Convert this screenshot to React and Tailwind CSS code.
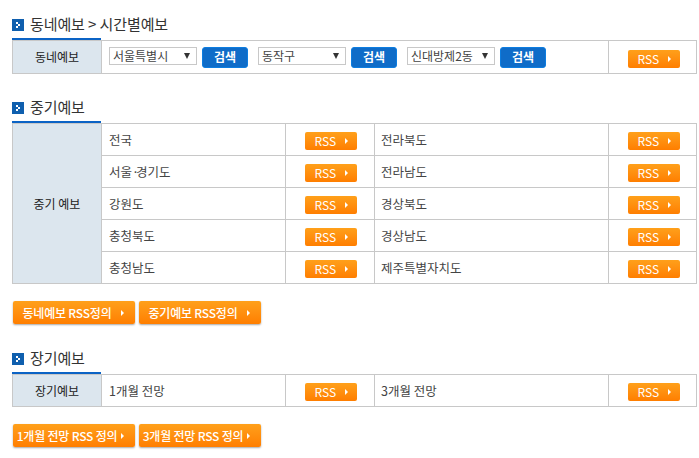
const font = { fontFamily: '"Noto Sans CJK KR", "Noto Sans", sans-serif' };

const midRows = [
  ['전국', '전라북도'],
  [<>서울<span className="tracking-[-3px]">·</span>경기도</>, '전라남도'],
  ['강원도', '경상북도'],
  ['충청북도', '경상남도'],
  ['충청남도', '제주특별자치도'],
];

const Bullet = () => (
  <svg width="12" height="12" viewBox="0 0 12 12" className="shrink-0">
    <rect width="12" height="12" fill="#0f5fae" />
    <rect x="4" y="3" width="2" height="2" fill="#fff" />
    <rect x="6" y="5" width="2" height="2" fill="#fff" />
    <rect x="4" y="7" width="2" height="2" fill="#fff" />
  </svg>
);

const Heading = ({ children }) => (
  <div>
    <h2 className="flex items-center gap-[6px] h-[24px] pb-[2px] text-[15px] font-normal text-[#333] tracking-[-0.1px]">
      <Bullet />
      <span className="mb-[2px]">{children}</span>
    </h2>
    <div className="w-[89px] h-[2px] bg-[#0b63c5]" />
  </div>
);

const Rss = () => (
  <a className="flex items-center justify-between w-[52px] h-[18px] pl-[10px] pr-[9px] rounded-[2px] bg-gradient-to-b from-[#ffa01a] to-[#ff7e00] text-white text-[12px]">
    RSS
    <span className="w-0 h-0 border-y-[3px] border-y-transparent border-l-[3px] border-l-white" />
  </a>
);

const RssCell = ({ className }) => (
  <div className={`flex items-center justify-center border-l border-[#c8c8c8] ${className}`}>
    <Rss />
  </div>
);

const Search = () => (
  <button className="w-[46px] h-[21px] rounded-[3px] bg-[#0f6cc8] border border-[#0d7de0] text-white text-[12px] font-bold leading-none">
    검색
  </button>
);

const Select = ({ label }) => (
  <div className="flex items-center justify-between w-[88px] h-[18px] pl-[3px] pr-[6px] border border-[#c8c8c8] text-[12px] text-[#444]">
    {label}
    <span className="w-0 h-0 border-x-[3px] border-x-transparent border-t-[6px] border-t-[#333]" />
  </div>
);

const SideCell = ({ children }) => (
  <div className="flex items-center justify-center w-[89px] shrink-0 bg-[#dce6ee] border-r border-[#c8c8c8] text-[12px] text-[#222]">
    {children}
  </div>
);

const OrangeButton = ({ children }) => (
  <a className="flex items-center w-[122px] h-[23px] pr-[11px] rounded-[2px] bg-gradient-to-b from-[#ffa01a] to-[#ff7e00] shadow-[0_1px_2px_rgba(0,0,0,0.35)] text-white text-[12px] font-medium whitespace-nowrap tracking-[-0.2px]">
    <span className="flex-1 text-center">{children}</span>
    <span className="shrink-0 w-0 h-0 border-y-[3px] border-y-transparent border-l-[3px] border-l-white" />
  </a>
);

const App = () => {
  return (
    <div className="w-[699px] h-[458px] bg-white overflow-hidden pl-[12px] pr-[2px] pt-[14px]" style={font}>
      <Heading>동네예보 &gt; 시간별예보</Heading>
      <div className="flex h-[34px] border border-[#c8c8c8]">
        <SideCell>동네예보</SideCell>
        <div className="flex items-center flex-1 pl-[7px]">
          <div className="flex items-start gap-[5px] mr-[10px]"><Select label="서울특별시" /><Search /></div>
          <div className="flex items-start gap-[5px] mr-[10px]"><Select label="동작구" /><Search /></div>
          <div className="flex items-start gap-[5px]"><Select label="신대방제2동" /><Search /></div>
        </div>
        <RssCell className="w-[88px] pt-[4px] pl-[2px]" />
      </div>

      <div className="mt-[23px]">
        <Heading>중기예보</Heading>
      </div>
      <div className="flex border border-[#c8c8c8]">
        <SideCell>중기 예보</SideCell>
        <div className="flex-1">
          {midRows.map((row, i) => (
            <div key={i} className={`flex text-[12.5px] text-[#444] ${i > 0 ? 'h-[32px] border-t border-[#c8c8c8]' : 'h-[31px]'}`}>
              <div className="flex items-center w-[183px] pl-[7px] pt-[1px]">{row[0]}</div>
              <RssCell className="w-[90px] border-r pt-[3px] pl-[1px]" />
              <div className="flex items-center flex-1 pl-[6px] pt-[1px]">{row[1]}</div>
              <RssCell className="w-[88px] pt-[3px] pl-[2px]" />
            </div>
          ))}
        </div>
      </div>

      <div className="flex gap-[4px] ml-[1px] mt-[17px]">
        <OrangeButton>동네예보 RSS정의</OrangeButton>
        <OrangeButton>중기예보 RSS정의</OrangeButton>
      </div>

      <div className="mt-[24px]">
        <Heading>장기예보</Heading>
      </div>
      <div className="flex h-[33px] border border-[#c8c8c8] text-[12.5px] text-[#444]">
        <SideCell>장기예보</SideCell>
        <div className="flex items-center w-[183px] pl-[7px] pt-[1px]">1개월 전망</div>
        <RssCell className="w-[90px] border-r pt-[3px] pl-[1px]" />
        <div className="flex items-center flex-1 pl-[6px] pt-[1px]">3개월 전망</div>
        <RssCell className="w-[88px] pt-[3px] pl-[2px]" />
      </div>

      <div className="flex gap-[4px] ml-[1px] mt-[17px]">
        <OrangeButton>1개월 전망 RSS 정의</OrangeButton>
        <OrangeButton>3개월 전망 RSS 정의</OrangeButton>
      </div>
    </div>
  );
};

export default App;
